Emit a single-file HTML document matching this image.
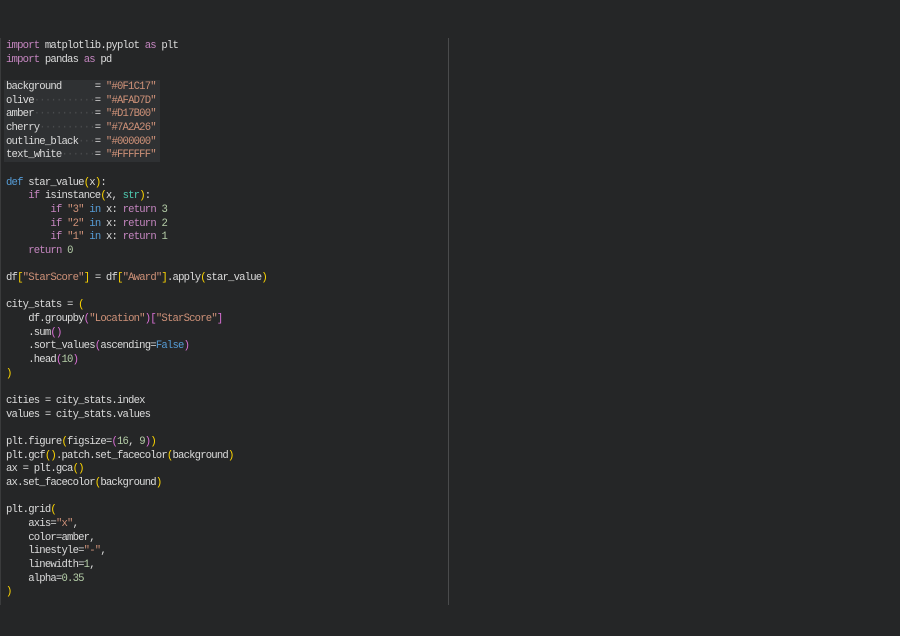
<!DOCTYPE html>
<html><head><meta charset="utf-8"><style>
html,body{margin:0;padding:0;background:#252627;width:900px;height:636px;overflow:hidden}
.edge{position:absolute;left:0;top:38px;width:1px;height:567px;background:#3a3b3c}
.div{position:absolute;left:448px;top:38px;width:1px;height:567px;background:#4a4b4c}
pre{position:absolute;left:6px;top:40px;margin:0;font-family:"Liberation Mono",monospace;font-size:10.6px;letter-spacing:-0.81px;line-height:13.65px;color:#dcdcdc}
.hl{position:absolute;left:4px;width:156px;height:13.65px;background:#2f3133}
.k{color:#c586c0}.b{color:#569cd6}.s{color:#ce9178}.n{color:#b5cea8}.t{color:#4ec9b0}
.y{color:#ffd700}.p{color:#da70d6}.u{color:#179fff}.d{color:#4a4c4e}
</style></head><body>
<div class="edge"></div><div class="div"></div>
<div class="hl" style="top:80px"></div>
<div class="hl" style="top:94px"></div>
<div class="hl" style="top:107px"></div>
<div class="hl" style="top:121px"></div>
<div class="hl" style="top:135px"></div>
<div class="hl" style="top:148px"></div>
<pre><span class="k">import</span> matplotlib.pyplot <span class="k">as</span> plt
<span class="k">import</span> pandas <span class="k">as</span> pd

background      = <span class="s">"#0F1C17"</span>
olive<span class="d">···········</span>= <span class="s">"#AFAD7D"</span>
amber<span class="d">···········</span>= <span class="s">"#D17B00"</span>
cherry<span class="d">··········</span>= <span class="s">"#7A2A26"</span>
outline_black<span class="d">···</span>= <span class="s">"#000000"</span>
text_white<span class="d">······</span>= <span class="s">"#FFFFFF"</span>

<span class="b">def</span> star_value<span class="y">(</span>x<span class="y">)</span>:
    <span class="k">if</span> isinstance<span class="y">(</span>x, <span class="t">str</span><span class="y">)</span>:
        <span class="k">if</span> <span class="s">"3"</span> <span class="b">in</span> x: <span class="k">return</span> <span class="n">3</span>
        <span class="k">if</span> <span class="s">"2"</span> <span class="b">in</span> x: <span class="k">return</span> <span class="n">2</span>
        <span class="k">if</span> <span class="s">"1"</span> <span class="b">in</span> x: <span class="k">return</span> <span class="n">1</span>
    <span class="k">return</span> <span class="n">0</span>

df<span class="y">[</span><span class="s">"StarScore"</span><span class="y">]</span> = df<span class="y">[</span><span class="s">"Award"</span><span class="y">]</span>.apply<span class="y">(</span>star_value<span class="y">)</span>

city_stats = <span class="y">(</span>
    df.groupby<span class="p">(</span><span class="s">"Location"</span><span class="p">)</span><span class="p">[</span><span class="s">"StarScore"</span><span class="p">]</span>
    .sum<span class="p">()</span>
    .sort_values<span class="p">(</span>ascending=<span class="b">False</span><span class="p">)</span>
    .head<span class="p">(</span><span class="n">10</span><span class="p">)</span>
<span class="y">)</span>

cities = city_stats.index
values = city_stats.values

plt.figure<span class="y">(</span>figsize=<span class="p">(</span><span class="n">16</span>, <span class="n">9</span><span class="p">)</span><span class="y">)</span>
plt.gcf<span class="y">()</span>.patch.set_facecolor<span class="y">(</span>background<span class="y">)</span>
ax = plt.gca<span class="y">()</span>
ax.set_facecolor<span class="y">(</span>background<span class="y">)</span>

plt.grid<span class="y">(</span>
    axis=<span class="s">"x"</span>,
    color=amber,
    linestyle=<span class="s">"-"</span>,
    linewidth=<span class="n">1</span>,
    alpha=<span class="n">0.35</span>
<span class="y">)</span></pre>
</body></html>
